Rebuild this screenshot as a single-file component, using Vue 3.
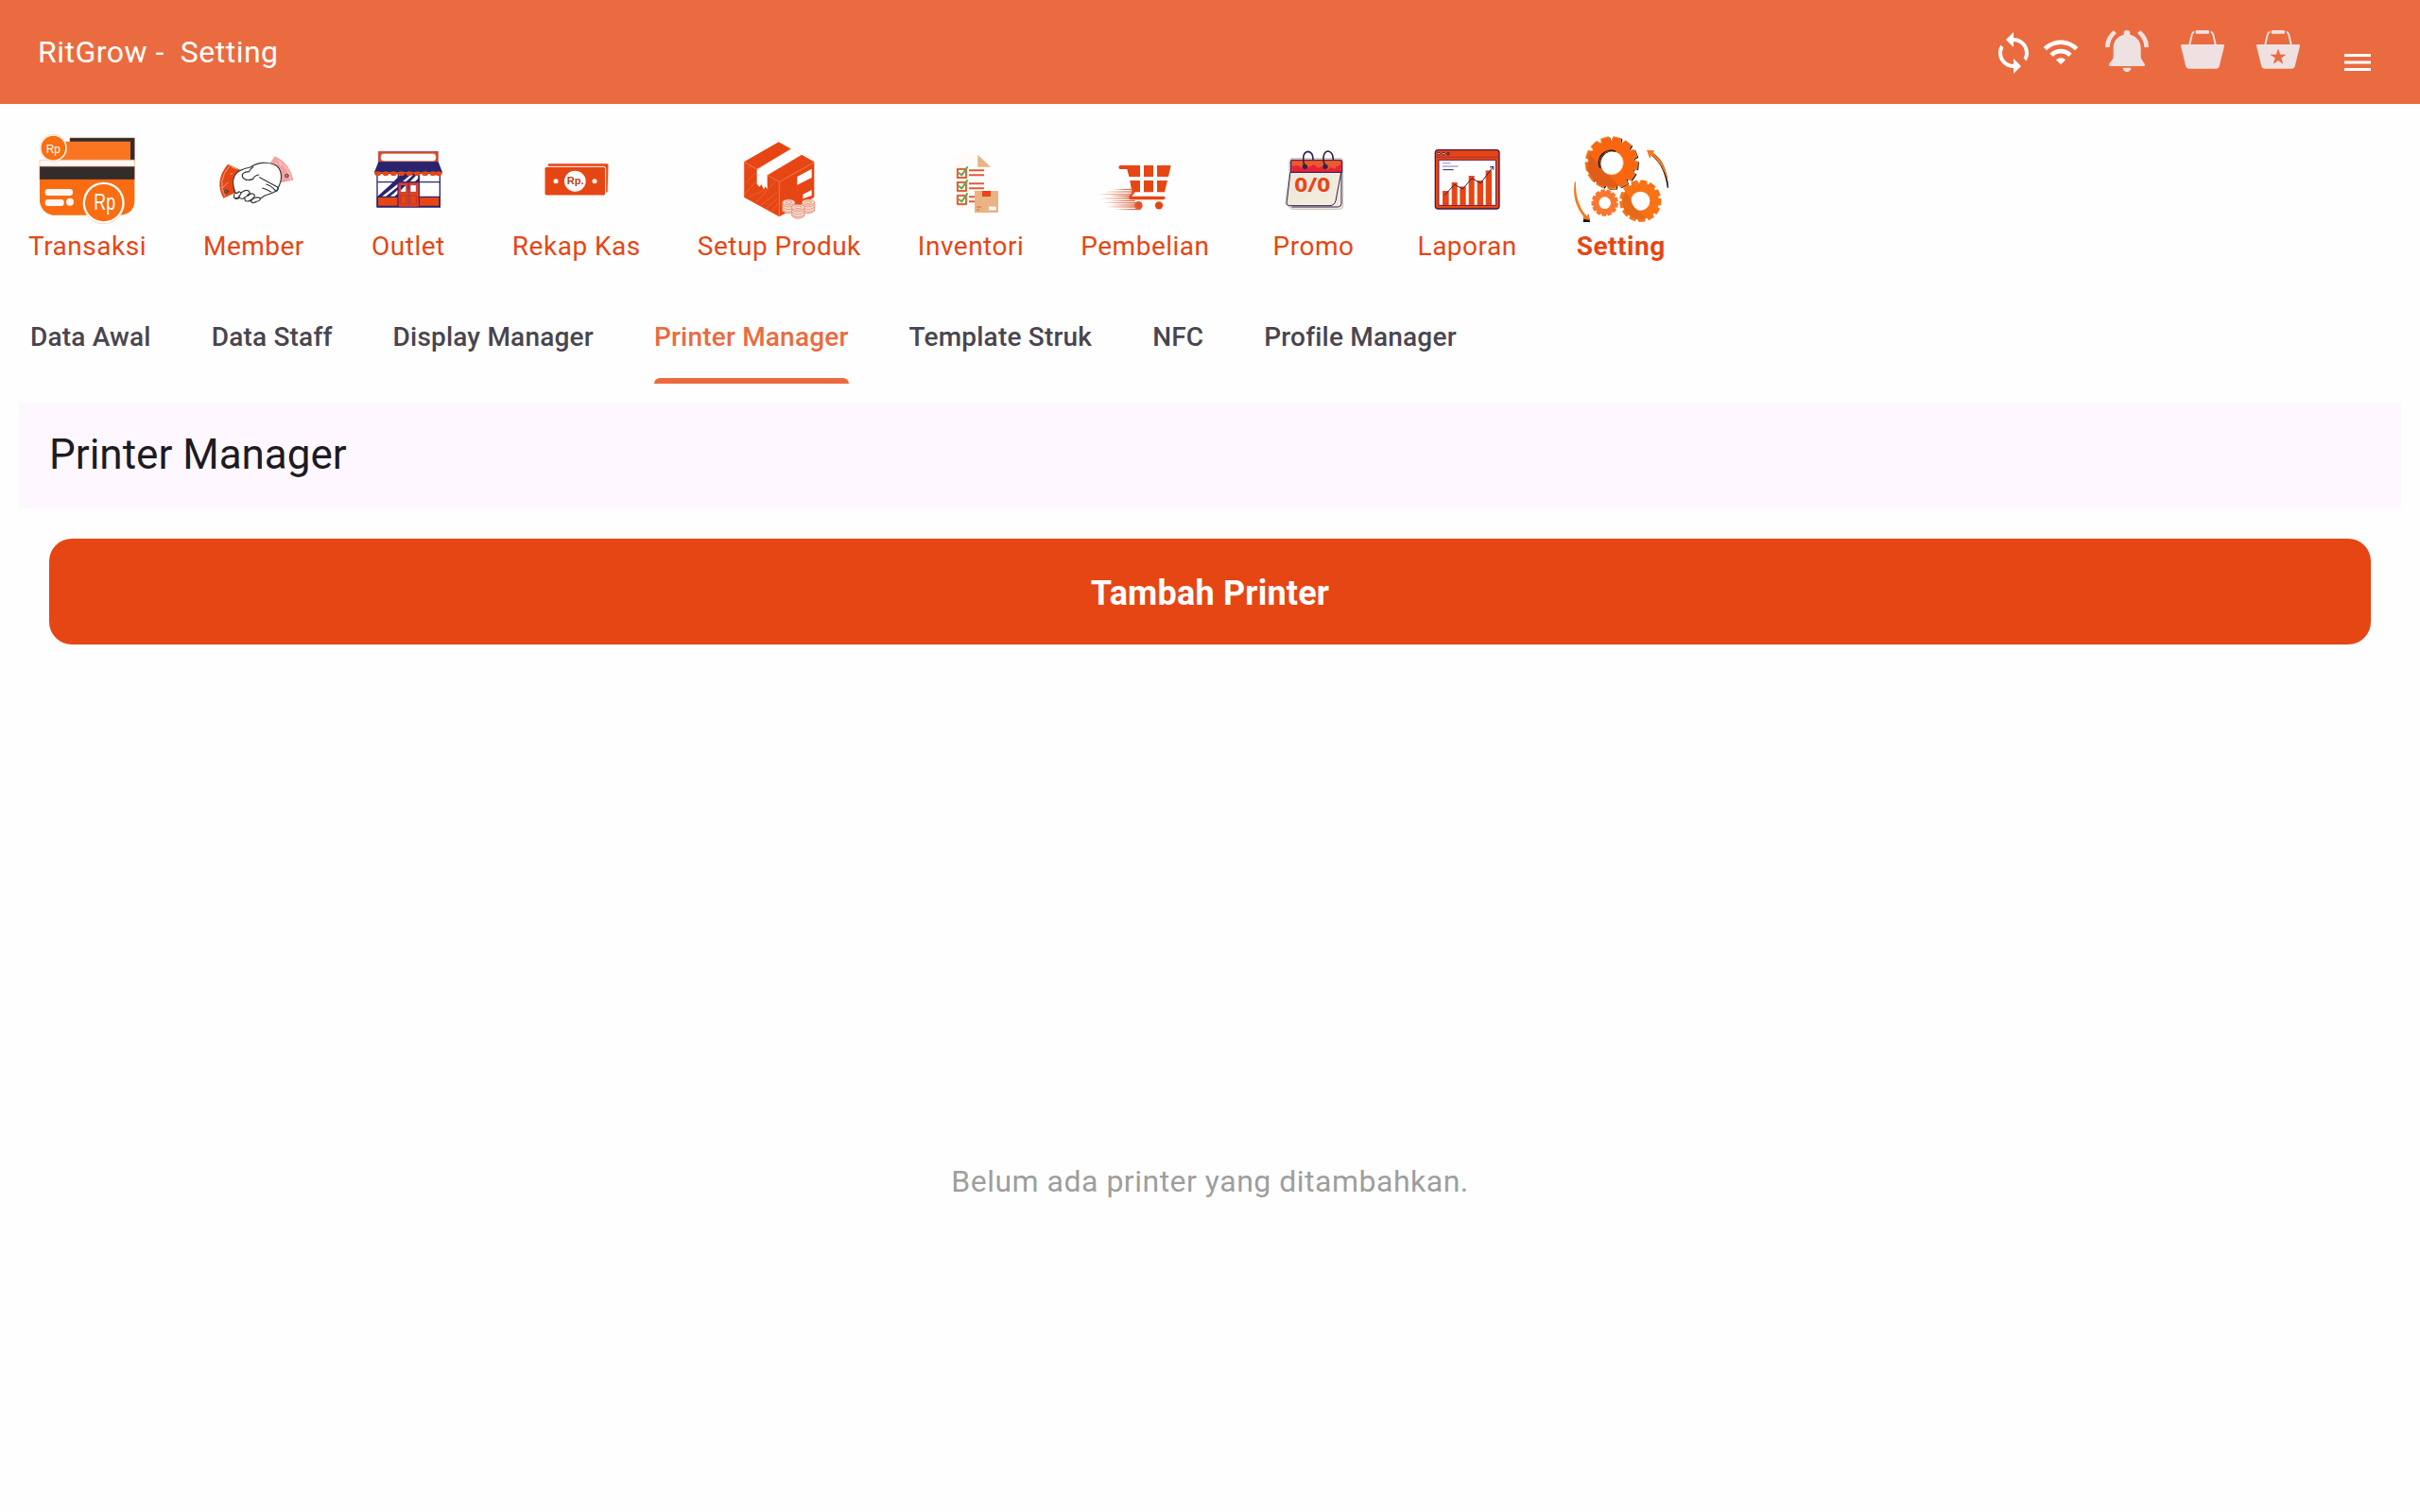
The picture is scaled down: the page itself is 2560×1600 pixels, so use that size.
<script setup>
const menus = [
  { id: 'transaksi', label: 'Transaksi', box: '67 30 300 300' },
  { id: 'member', label: 'Member', box: '25 30 300 300' },
  { id: 'outlet', label: 'Outlet', box: '516 30 300 300' },
  { id: 'kas', label: 'Rekap Kas', box: '90 30 300 300' },
  { id: 'produk', label: 'Setup Produk', box: '733 30 300 300' },
  { id: 'inventori', label: 'Inventori', box: '51 30 300 300' },
  { id: 'pembelian', label: 'Pembelian', box: '603 30 300 300' },
  { id: 'promo', label: 'Promo', box: '27 30 300 300' },
  { id: 'laporan', label: 'Laporan', box: '514 30 300 300' },
  { id: 'setting', label: 'Setting', box: '75 30 300 300', active: true },
]

const tabs = [
  { label: 'Data Awal' },
  { label: 'Data Staff' },
  { label: 'Display Manager' },
  { label: 'Printer Manager', active: true },
  { label: 'Template Struk' },
  { label: 'NFC' },
  { label: 'Profile Manager' },
]

// Gear outline: wide teeth with narrow notches and a round hole.
function gear(cx, cy, outer, inner, hole, teeth, turn = 0) {
  const step = (Math.PI * 2) / teeth
  const pts = []
  for (let i = 0; i < teeth; i++) {
    const a = i * step + turn
    const add = (r, t) => pts.push(`${(cx + r * Math.cos(a + t * step)).toFixed(1)} ${(cy + r * Math.sin(a + t * step)).toFixed(1)}`)
    add(inner, -0.42)
    add(outer, -0.32)
    add(outer, 0.32)
    add(inner, 0.42)
  }
  return `M${pts.join('L')}ZM${cx - hole} ${cy}a${hole} ${hole} 0 1 0 ${hole * 2} 0a${hole} ${hole} 0 1 0 ${-hole * 2} 0Z`
}

const bigGear = gear(194, 127, 84, 72, 38, 13, 0.1)
const midGear = gear(286, 248, 67, 58, 30, 13, 0.05)
const smallGear = gear(173, 254, 43, 37, 19, 13, 0.2)

const checks = [160, 202, 244]
const scallops = [572, 597, 622, 647, 672, 697, 722, 747, 765]
const speedLines = [
  [650, 211, 716], [624, 219, 716], [606, 227, 712], [640, 233, 706], [614, 240, 706],
  [638, 247, 722], [620, 254, 726], [640, 261, 724], [628, 267, 728], [656, 274, 740],
]
const bars = [
  [586, 216, 20], [615, 189, 18], [641, 202, 19], [669, 168, 18], [696, 183, 19], [723, 151, 19],
]
const coins = [
  [914, 252], [976, 252], [944, 268],
]
</script>

<template>
  <div class="app">
    <header class="topbar">
      <h1 class="brand">RitGrow -&nbsp; Setting</h1>
      <div class="actions">
        <svg class="sync" viewBox="0 0 24 24"><path fill="#fff" d="M12 4V1L8 5l4 4V6c3.31 0 6 2.69 6 6 0 1.01-.25 1.97-.7 2.8l1.46 1.46C19.54 15.03 20 13.57 20 12c0-4.42-3.58-8-8-8zm0 14c-3.31 0-6-2.69-6-6 0-1.01.25-1.97.7-2.8L5.24 7.74C4.46 8.97 4 10.43 4 12c0 4.42 3.58 8 8 8v3l4-4-4-4v3z" /></svg>
        <svg class="wifi" viewBox="0 0 24 24"><path fill="#fff" d="M1 9l2 2c4.97-4.97 13.03-4.97 18 0l2-2C16.93 2.93 7.08 2.93 1 9zm8 8l3 3 3-3c-1.65-1.66-4.34-1.66-6 0zm-4-4l2 2c2.76-2.76 7.24-2.76 10 0l2-2C15.14 9.14 8.87 9.14 5 13z" /></svg>
        <svg class="bell" viewBox="441 96 138 132">
          <g fill="#efe1e1">
            <path d="M500 110V106a10 10 0 0 1 20 0V110C540 114 554 131 554 152V181C554 190 567 199 567 206Q567 210 563 210H457Q453 210 453 206C453 199 467 190 467 181V152C467 131 480 114 500 110Z" />
            <path d="M497 215H523A13 13 0 0 1 497 215Z" />
            <path d="M467 97L477 105Q456 124 455 150H441Q441 118 467 97ZM553 97L543 105Q564 124 565 150H579Q579 118 553 97Z" />
          </g>
        </svg>
        <svg v-for="star in [false, true]" :key="String(star)" class="basket" viewBox="681 96 138 123">
          <g fill="#efe1e1">
            <path d="M706 141L714 107Q717 99 724 98V104Q720 105 719 110L712 141ZM794 141L786 107Q783 99 776 98V104Q780 105 781 110L788 141Z" />
            <rect x="728" y="96" width="43" height="11" rx="3" />
            <path d="M684 141H816Q820 141 819 146L803 211Q801 218 794 218H706Q699 218 697 211L681 146Q680 141 684 141Z" />
          </g>
          <path v-if="star" fill="#eb6b40" stroke="#eb6b40" stroke-width="2" stroke-linejoin="round" d="M750 157L755.500 174H773L759 184L764 201L750 191L736 201L741 184L727 174H744.500Z" />
        </svg>
        <svg class="burger" viewBox="0 0 28 18"><path fill="#fff" d="M0 0H28V3H0ZM0 7.500H28V10.500H0ZM0 15H28V18H0Z" /></svg>
      </div>
    </header>

    <nav class="menu">
      <a v-for="m in menus" :key="m.id" class="menu-item" :class="{ active: m.active }">
        <svg class="menu-icon" :viewBox="m.box">
          <g v-if="m.id === 'transaksi'">
            <path fill="#322c2b" stroke="#8b5a3c" stroke-width="1.500" d="M163 48H368V124H163Z" />
            <path fill="#f97521" d="M140 59H355V122H100Z" />
            <path fill="#fbf8f6" stroke="#fbb98c" stroke-width="2" d="M67 118H368V139H67Z" />
            <path fill="#322c2b" stroke="#b5632c" stroke-width="1.500" d="M67 139H368V180H67Z" />
            <path fill="#fa6c12" d="M67 180H368V252Q364 288 325 293H108Q74 288 67 252Z" />
            <g fill="#fdf7f3"><rect x="84" y="210" width="88" height="21" rx="9" /><rect x="84" y="243" width="60" height="21" rx="9" /><circle cx="163" cy="251" r="12" /></g>
            <circle cx="110" cy="80" r="43" fill="#fff" stroke="#fcc9a5" stroke-width="2" />
            <circle cx="110" cy="80" r="38.500" fill="#f96f13" />
            <circle cx="270" cy="254" r="66" fill="#fff" />
            <path d="M212 286A66 66 0 0 0 328 286" fill="none" stroke="#fbc19c" stroke-width="2" />
            <circle cx="270" cy="254" r="59" fill="#f96d13" />
            <text x="110" y="95" class="rp" font-size="41" textLength="46" lengthAdjust="spacingAndGlyphs">Rp</text>
            <text x="273" y="275" class="rp" font-size="72" textLength="68" lengthAdjust="spacingAndGlyphs">Rp</text>
          </g>

          <g v-else-if="m.id === 'member'" stroke-linecap="round" stroke-linejoin="round">
            <path fill="#e64614" d="M94 131L135 150Q108 180 118 222L80 239Q50 184 94 131Z" />
            <path fill="none" stroke="#f7b29c" stroke-width="2.500" d="M99 137Q59 184 84 232M76 207L94 190M103 163L108 160M106 140L122 147" />
            <path fill="#f99f9f" d="M243 106Q290 127 302 182L262 190Q264 145 228 128Z" />
            <path fill="none" stroke="#fde0e0" stroke-width="2.500" d="M253 119Q289 142 294 181M246 127L250 133M258 128L264 137" />
            <circle cx="89" cy="218" r="5" fill="#777" stroke="#333" stroke-width="3" />
            <circle cx="281" cy="168" r="5" fill="#aaa" stroke="#333" stroke-width="3" />
            <g fill="#fff" stroke="#333" stroke-width="3.500">
              <path d="M118 222C109 200 107 173 124 157Q137 147 165 141C188 125 219 122 246 134C265 146 267 175 259 194L250 215Q230 226 211 231L181 252Q169 257 168 247L153 249Q146 247 149 240L132 236Q126 243 116 240Q110 232 118 222Z" />
              <path fill="none" d="M174 140Q166 145 161 155Q135 156 141 173Q151 187 174 178Q179 167 192 165M195 173L252 204Q256 210 249 216M204 207Q219 212 231 219M216 195Q231 199 246 216" />
              <path d="M116 222Q125 226 130 218Q140 222 132 230Q127 240 118 239M137 221Q158 207 164 222Q157 231 143 240Q133 243 130 235M157 232Q171 219 179 229Q180 238 161 248M171 244Q180 234 195 238Q202 247 181 251" />
            </g>
          </g>

          <g v-else-if="m.id === 'outlet'">
            <path fill="#fff" stroke="#282470" stroke-width="4" d="M567 160H766V267H567Z" />
            <path fill="#e64614" stroke="#8a4a6a" stroke-width="2" d="M571 91H760V128H571Z" />
            <rect x="578" y="97" width="176" height="25" rx="10" fill="#fff" stroke="#a33a35" stroke-width="1.500" />
            <path fill="#282470" d="M640 160H700V186L632 237H570V232L608 197L640 166Z" />
            <path fill="#fff" d="M582 234L632 194V203L594 234ZM608 234L632 213V224L622 234ZM648 186L672 166H681L659 186ZM672 186L692 166H697V177L687 186Z" />
            <path fill="#e64614" stroke="#282470" stroke-width="4" d="M568 235H634V265H568ZM700 235H765V265H700Z" />
            <path stroke="#282470" stroke-width="4" fill="none" d="M568 188H766M634 160V265M700 160V265" />
            <path fill="#e64614" stroke="#9b254a" stroke-width="2.500" d="M635 190H665V266H635ZM667 190H699V266H667Z" />
            <path fill="#fff" stroke="#962c50" stroke-width="2" d="M641 197H659V220H641ZM672 197H691V220H672Z" />
            <path fill="#282470" d="M642 198H658L642 214Z" />
            <path fill="none" stroke="#a72d35" stroke-width="2" d="M641 230H659V258H641ZM672 230H691V258H672Z" />
            <path fill="#282470" d="M571 124H761L774 157H558Z" />
            <path fill="#e64614" d="M558 156H774V161H558Z" />
            <ellipse v-for="x in scallops" :key="x" :cx="x - 3" cy="161" rx="10" ry="7" fill="#e64614" />
          </g>

          <g v-else-if="m.id === 'kas'">
            <path fill="#e64614" stroke="#e87a58" stroke-width="1.500" d="M150 130H336Q340 130 340 134L338 217Q338 221 332 221H150Z" />
            <rect x="138" y="139" width="194" height="92" rx="6" fill="#e64614" stroke="#fff" stroke-width="3" />
            <ellipse cx="235" cy="185" rx="34" ry="33" fill="#fff" />
            <circle cx="174" cy="185" r="7.500" fill="#fff" /><circle cx="297" cy="185" r="7.500" fill="#fff" />
            <text x="236" y="195" class="rp-bold" font-size="34" textLength="54" lengthAdjust="spacingAndGlyphs">Rp.</text>
          </g>

          <g v-else-if="m.id === 'produk'" stroke-linejoin="round">
            <path fill="#e64614" d="M882 61L995 124V236L884 298L772 236V124Z" />
            <path fill="#fefefe" stroke="#fefefe" stroke-width="2" d="M922 83L954 101L845 166V208L840 200L835 209L828 194L821 202L814 194V148Z" />
            <path fill="none" stroke="#f0906f" stroke-width="2" d="M773 124L813 147M845 165L884 187L995 125M884 187V297M773 125V236" />
            <path fill="none" stroke="#ed7852" stroke-width="1.500" d="M778 190L810 158M776 225L812 184M788 234L838 214M810 252L868 190M825 262L878 220M780 145L796 136M840 274L880 238M858 282L880 256" />
            <path fill="#fff" d="M941 171L987 146V174L941 197ZM959 227L987 213V231L959 241Z" />
            <g v-for="c in coins" :key="c[0]" fill="#f9ddd4" stroke="#e07a58" stroke-width="2">
              <path :d="`M${c[0] - 20} ${c[1]}v28q20 16 40 0v-28z`" />
              <ellipse :cx="c[0]" :cy="c[1]" rx="20" ry="9" />
              <ellipse :cx="c[0]" :cy="c[1]" rx="11" ry="4" />
              <path fill="none" :d="`M${c[0] - 20} ${c[1] + 8}q20 14 40 0M${c[0] - 20} ${c[1] + 16}q20 14 40 0M${c[0] - 20} ${c[1] + 24}q20 14 40 0`" />
            </g>
          </g>

          <g v-else-if="m.id === 'inventori'">
            <path fill="#fffcfa" d="M137 100H223L264 140V276H137Z" />
            <path fill="#e9b384" d="M223 101L264 140H223Z" />
            <g v-for="y in checks" :key="y">
              <rect x="159" :y="y - 13" width="27" height="27" fill="#fffaf5" stroke="#d9481c" stroke-width="5" />
              <path fill="none" stroke="#c98d5c" stroke-width="1" :d="`M156 ${y - 16}h33v33h-33z`" />
              <path fill="none" stroke="#64a84c" stroke-width="6" :d="`M162 ${y - 2}L172 ${y + 6}L191 ${y - 21}`" />
              <path stroke="#e0583a" stroke-width="6" :d="`M195 ${y - 9}h48M195 ${y + 6}h48`" />
            </g>
            <path fill="#e9b384" d="M213 216H288V285H213Z" />
            <path fill="#e64614" d="M237 216H264V234H237Z" />
            <path fill="#fff" d="M258 266H281V277H258Z" />
            <path stroke="#e08052" stroke-width="4" d="M219 267H234M219 276H228" />
          </g>

          <g v-else-if="m.id === 'pembelian'" fill="#e64614">
            <path d="M676 135H738V171H703L697 147H676Q670 147 670 141T676 135ZM750 135H780V171H750ZM792 135H836L828 171H792ZM706 183H738V220H713ZM750 183H780V220H750ZM792 183H825L816 220H792Z" />
            <path d="M706 183L722 220L712 233H812Q818 233 818 238T812 244H710Q701 243 702 235L713 218Z" />
            <circle cx="733" cy="262" r="13" fill="#e2532a" /><circle cx="798" cy="262" r="12.500" />
            <path v-for="l in speedLines" :key="l[1]" :d="`M${l[0]} ${l[1]}L${l[2]} ${l[1] - 2}V${l[1] + 2.5}Z`" fill="#df6947" />
          </g>

          <g v-else-if="m.id === 'promo'" stroke-linecap="round" stroke-linejoin="round">
            <path fill="#f2ecdf" stroke="#c9c0bd" stroke-width="3" d="M106 113H262Q268 113 269 119V264Q269 273 260 274H108L86 258L99 160V122Q99 114 106 113Z" />
            <path fill="#efe8dc" stroke="#33224c" stroke-width="3" d="M103 157H263L246 247Q242 262 228 263H98Q88 260 91 249ZM107 267H254Q264 266 264 256V157" />
            <path fill="#e8213a" stroke="#33224c" stroke-width="3" d="M108 118H261Q266 118 266 124V157H103V123Q103 118 108 118Z" />
            <path fill="#eb5a2a" d="M107 121H262V134L249 137L244 146L230 141L220 149L202 139L190 143L176 132L164 140L151 137L139 143L126 135L107 138Z" />
            <g fill="none" stroke="#33224c" stroke-width="5"><path d="M148 139C139 113 142 92 159 91Q174 94 174 116M213 139C202 113 207 91 222 90Q237 92 238 116" /></g>
            <circle cx="148" cy="139" r="8" fill="#33224c" /><circle cx="213" cy="139" r="8" fill="#33224c" />
            <text x="172" y="219" class="promo" font-size="64" textLength="114" lengthAdjust="spacingAndGlyphs">0/0</text>
          </g>

          <g v-else-if="m.id === 'laporan'">
            <rect x="563" y="86" width="203" height="187" rx="9" fill="#e64614" stroke="#4c1747" stroke-width="4" />
            <path stroke="#8c2743" stroke-width="2" d="M564 109H765" />
            <path fill="#fff" stroke="#6a1b45" stroke-width="3" d="M574 118H755V262H574Z" />
            <g fill="#f7dde5" stroke="#4c1747" stroke-width="3"><circle cx="574" cy="98" r="4" /><circle cx="589" cy="98" r="4" /><circle cx="604" cy="98" r="4" fill="#96506a" /></g>
            <path stroke="#aaa3d2" stroke-width="4" d="M585 128H612M585 138H636" /><path stroke="#2b2052" stroke-width="3" d="M587 149H621" />
            <path v-for="b in bars" :key="b[0]" fill="#e64614" :d="`M${b[0]} ${b[1]}h${b[2]}V261h${-b[2]}z`" />
            <path fill="none" stroke="#2b2052" stroke-width="3" d="M592 230L624 196L650 210L679 176L707 192L746 140M736 141L747 138V149" />
          </g>

          <g v-else>
            <path :d="bigGear" fill="#171010" fill-rule="evenodd" transform="translate(4 2)" />
            <path :d="bigGear" fill="#f9660f" stroke="#e9a85a" stroke-width="2" fill-rule="evenodd" />
            <path fill="#e15d17" d="M123 99L156 133Q162 164 187 167L218 200L190 205L150 194L117 153Z" />
            <path fill="none" stroke="#171010" stroke-width="4" d="M158 143A38 38 0 0 1 207 91" />
            <path :d="midGear" fill="#f97316" fill-rule="evenodd" />
            <path fill="#e56a18" d="M237 219L256 241Q258 266 278 278L304 304L278 308L238 285L227 250Z" />
            <path :d="smallGear" fill="#f9772f" fill-rule="evenodd" />
            <path fill="#171010" d="M321 93Q370 120 375 206H371Q362 136 322 105ZM77 220Q82 266 107 294L104 315H126L122 291L116 298Q88 272 77 220Z" />
            <path fill="#f47b20" d="M306 86L330 88L327 97Q367 127 373 190Q358 130 321 103L315 113ZM81 186Q78 251 114 296L122 289L124 308L103 305L108 301Q67 252 77 190Z" />
          </g>
        </svg>
        <span>{{ m.label }}</span>
      </a>
    </nav>

    <nav class="tabs">
      <a v-for="t in tabs" :key="t.label" class="tab" :class="{ active: t.active }">{{ t.label }}</a>
    </nav>

    <main class="content">
      <div class="panel-title"><h2>Printer Manager</h2></div>
      <button class="add">Tambah Printer</button>
      <div class="empty">Belum ada printer yang ditambahkan.</div>
    </main>
  </div>
</template>

<style>
body { margin: 0; background: #fefefe; }
</style>

<style scoped>
.app {
  width: 2560px;
  height: 1600px;
  display: flex;
  flex-direction: column;
  overflow: hidden;
  background: #fefefe;
  font-family: Roboto, sans-serif;
}
.topbar {
  height: 110px;
  flex: none;
  display: flex;
  justify-content: space-between;
  box-sizing: border-box;
  padding: 0 52px 0 40px;
  background: #eb6b40;
  color: #fff;
}
.brand { margin: 0; font-size: 32px; font-weight: 400; line-height: 110px; letter-spacing: 0.5px; }
.actions { display: flex; align-items: flex-start; }
.actions svg { display: block; flex: none; }
.sync { width: 48px; height: 48px; margin: 32px 6px 0 0; }
.wifi { width: 40px; height: 40px; margin: 34.6px 27px 0 0; }
.bell { width: 46px; height: 44px; margin: 32px 34px 0 0; }
.basket { width: 46px; height: 41px; margin: 32px 34px 0 0; }
.burger { width: 28px; height: 18px; margin: 57px 0 0 13px; }

.menu { height: 200px; flex: none; display: flex; gap: 60px; padding-left: 30px; }
.menu-item {
  min-width: 100px;
  display: flex;
  flex-direction: column;
  align-items: center;
  padding-top: 30px;
  color: #e64614;
  font-size: 28px;
  line-height: 42px;
  letter-spacing: 0.5px;
}
.menu-item.active { font-weight: 700; }
.menu-icon { display: block; flex: none; width: 100px; height: 100px; overflow: visible; }
.rp { fill: #fff; font-family: "Liberation Sans", sans-serif; text-anchor: middle; letter-spacing: 0; }
.rp-bold { fill: #b9411e; font-family: "Liberation Sans", sans-serif; font-weight: 700; text-anchor: middle; letter-spacing: 0; }
.promo { fill: #e64614; font-family: "Open Sans", sans-serif; font-weight: 700; text-anchor: middle; letter-spacing: 0; }

.tabs { height: 96px; flex: none; display: flex; gap: 64px; padding-left: 32px; }
.tab {
  box-sizing: border-box;
  height: 96px;
  display: flex;
  flex-direction: column;
  color: #49454f;
  font-size: 28px;
  font-weight: 500;
  line-height: 94px;
  letter-spacing: 0.2px;
}
.tab.active { color: #eb6b40; }
.tab.active::after { content: ""; height: 6px; margin-top: -4px; flex: none; border-radius: 6px 6px 0 0; background: #eb6b40; }

.content { flex: 1; display: flex; flex-direction: column; padding: 20px 20px 0; }
.panel-title { height: 112px; flex: none; padding-left: 32px; background: #fef7ff; color: #1d1b20; }
.panel-title h2 { margin: 0; font-size: 44px; font-weight: 400; line-height: 110px; }
.add {
  height: 112px;
  flex: none;
  margin: 32px 32px 0;
  padding: 3px 0 0;
  border: 0;
  border-radius: 24px;
  background: #e64614;
  color: #fff;
  font: 700 36px Roboto, sans-serif;
  letter-spacing: 0.2px;
}
.empty { margin-top: 546px; color: #9e9e9e; font-size: 32px; line-height: 44px; letter-spacing: 0.5px; text-align: center; }
</style>
